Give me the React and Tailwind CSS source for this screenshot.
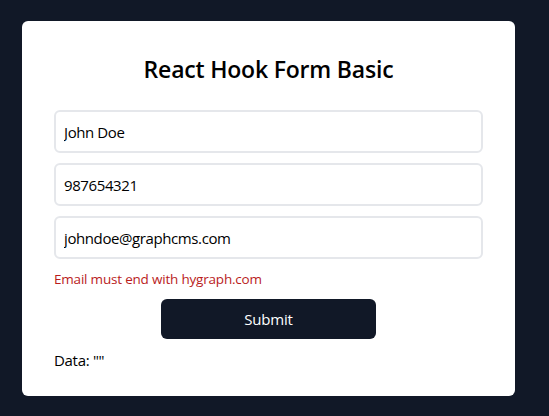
import React from "react";

export default function App() {
  const inputCls =
    "h-[43px] w-full border-2 border-[#e5e7eb] rounded-md px-2 text-[15px] tracking-[-0.4px] text-black outline-none";
  return (
    <div className="min-h-[416px] w-full bg-[#111827] pt-[21px] pl-[22px]" style={{ fontFamily: '"Open Sans", "Noto Sans", sans-serif' }}>
      <div className="w-[493px] h-[375px] bg-white rounded-md px-8 pt-8">
        <h1 className="text-[23px] leading-8 font-semibold tracking-[-0.2px] text-black text-center">React Hook Form Basic</h1>
        <div className="mt-[25px] flex flex-col gap-[10px]">
          <input readOnly value="John Doe" className={inputCls} />
          <input readOnly value="987654321" className={inputCls} />
          <input readOnly value="johndoe@graphcms.com" className={inputCls} />
        </div>
        <p className="mt-[10px] text-[13.5px] leading-5 tracking-[-0.2px] text-[#b91c1c]">Email must end with hygraph.com</p>
        <div className="mt-[10px] flex justify-center">
          <button className="w-[215px] h-10 bg-[#111827] text-white rounded-md text-[15px] tracking-[-0.2px]">Submit</button>
        </div>
        <p className="mt-[9px] text-[15px] leading-6 tracking-[-0.3px] text-black">Data: ""</p>
      </div>
    </div>
  );
}
